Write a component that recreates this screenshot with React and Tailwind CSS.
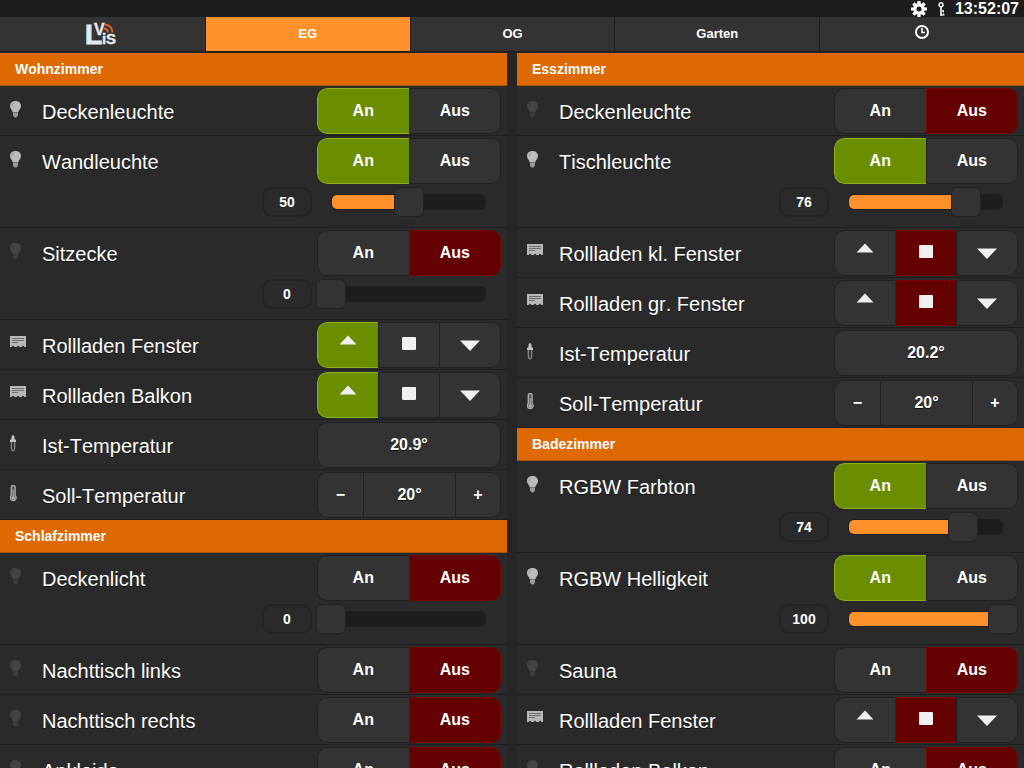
import { useState } from 'react'

const leftRooms = [
  {
    name: 'Wohnzimmer',
    items: [
      { type: 'switch', label: 'Deckenleuchte', on: true },
      { type: 'dimmer', label: 'Wandleuchte', on: true, value: 50 },
      { type: 'dimmer', label: 'Sitzecke', on: false, value: 0 },
      { type: 'shutter', label: 'Rollladen Fenster', state: 'up' },
      { type: 'shutter', label: 'Rollladen Balkon', state: 'up' },
      { type: 'sensor', label: 'Ist-Temperatur', value: '20.9°' },
      { type: 'setpoint', label: 'Soll-Temperatur', value: 20 },
    ],
  },
  {
    name: 'Schlafzimmer',
    items: [
      { type: 'dimmer', label: 'Deckenlicht', on: false, value: 0 },
      { type: 'switch', label: 'Nachttisch links', on: false },
      { type: 'switch', label: 'Nachttisch rechts', on: false },
      { type: 'switch', label: 'Ankleide', on: false },
    ],
  },
]

const rightRooms = [
  {
    name: 'Esszimmer',
    items: [
      { type: 'switch', label: 'Deckenleuchte', on: false },
      { type: 'dimmer', label: 'Tischleuchte', on: true, value: 76 },
      { type: 'shutter', label: 'Rollladen kl. Fenster', state: 'stop' },
      { type: 'shutter', label: 'Rollladen gr. Fenster', state: 'stop' },
      { type: 'sensor', label: 'Ist-Temperatur', value: '20.2°' },
      { type: 'setpoint', label: 'Soll-Temperatur', value: 20 },
    ],
  },
  {
    name: 'Badezimmer',
    items: [
      { type: 'dimmer', label: 'RGBW Farbton', on: true, value: 74 },
      { type: 'dimmer', label: 'RGBW Helligkeit', on: true, value: 100 },
      { type: 'switch', label: 'Sauna', on: false },
      { type: 'shutter', label: 'Rollladen Fenster', state: 'stop' },
      { type: 'switch', label: 'Rollladen Balkon', on: false },
    ],
  },
]

const groupClass = 'flex h-[46px] w-[184px] shrink-0 overflow-hidden rounded-[10px] text-base font-bold'
const idleClass = 'border-[#212121] bg-[#333333]'
const greenClass = 'border-[#8fb012] bg-[#6b8e00]'
const redClass = 'border-[#780505] bg-[#640000]'

function Logo() {
  return (
    <svg width="32" height="24" viewBox="0 0 32 24" className="overflow-visible" aria-label="LVis" role="img">
      <g fill="#e8e8e8" fontFamily="Liberation Sans, Arial, sans-serif" fontWeight="bold">
        <text x="-1" y="22" fontSize="28" stroke="#e8e8e8">L</text>
        <text x="8" y="13" fontSize="16" stroke="#e8e8e8" strokeWidth="0.4">V</text>
        <text x="16" y="22" fontSize="15" stroke="#e8e8e8" strokeWidth="0.4">i</text>
        <text x="20" y="22" fontSize="15" stroke="#e8e8e8" strokeWidth="0.4">S</text>
      </g>
      <g fill="none" stroke="#e0662a" strokeWidth="2">
        <path d="M18 6.500a4.500 4.500 0 0 1 4 4" />
        <path d="M18.500 2.500a8 8 0 0 1 8 8" />
      </g>
    </svg>
  )
}

function ClockIcon() {
  return (
    <svg width="14" height="14" viewBox="0 0 14 14" fill="none" stroke="#fff" aria-hidden="true">
      <circle cx="7" cy="7" r="6" strokeWidth="2" />
      <path d="M7 3V7.500H10" strokeWidth="1.600" />
    </svg>
  )
}

function GearIcon() {
  return (
    <svg width="16" height="16" viewBox="0 0 16 16" aria-hidden="true">
      <g stroke="#fff" strokeWidth="3.200">
        <path d="M8 0V4M8 12V16M0 8H4M12 8H16M2.400 2.400L5 5M11 11L13.600 13.600M13.600 2.400L11 5M5 11L2.400 13.600" />
      </g>
      <circle cx="8" cy="8" r="4.200" fill="none" stroke="#fff" strokeWidth="3.400" />
    </svg>
  )
}

function KeyIcon() {
  return (
    <svg width="8" height="14" viewBox="0 0 8 14" fill="none" stroke="#fff" aria-hidden="true">
      <circle cx="3" cy="2.800" r="2" strokeWidth="1.400" />
      <path d="M3 5V14" strokeWidth="1.600" />
      <path d="M3 9H6M5.300 8V10.500M3 12.800H6.500M5.500 11.500V13.500" strokeWidth="1.200" />
    </svg>
  )
}

function BulbIcon({ on }) {
  return (
    <svg width="17" height="17" viewBox="0 0 17 17" fill={on ? '#bcbcbc' : '#444444'} aria-hidden="true">
      <path d="M5.500 0C9 0 11 2.300 11 5C11 8 8.500 9 8.200 11.500H2.800C2.500 9 0 8 0 5C0 2.300 2 0 5.500 0Z" />
      <path d="M3 12H8V14.500L6.500 16.500H4.500L3 14.500Z" fill={on ? '#9a9a9a' : '#3c3c3c'} />
      <path d="M2 5.500C2 3.500 3 2.300 4.500 2" fill="none" stroke={on ? '#8f8f8f' : '#383838'} />
    </svg>
  )
}

function ShutterIcon() {
  return (
    <svg width="17" height="17" viewBox="0 0 17 17" aria-hidden="true">
      <path d="M0 1H16V12H14.500L13 10.500L11.500 12H9.500L8 10.500L6.500 12H4.500L3 10.500L1.500 12H0Z" fill="#b8b8b8" />
      <path d="M2 3.500H14M2 5.500H14M2 7.500H8" stroke="#6c6c6c" fill="none" />
    </svg>
  )
}

function ProbeIcon() {
  return (
    <svg width="17" height="17" viewBox="0 0 17 17" aria-hidden="true">
      <path d="M1.500 2.500Q1.500 0 3 0Q4.500 0 4.500 2.500V4L6 5V7H0V5L1.500 4Z" fill="#c4c4c4" />
      <path d="M1.300 7V12.500Q1.500 16 3 16Q4.500 16 4.700 12.500V7" fill="#333" stroke="#909090" strokeWidth="1.200" />
    </svg>
  )
}

function ThermometerIcon() {
  return (
    <svg width="17" height="17" viewBox="0 0 17 17" fill="none" aria-hidden="true">
      <path d="M1.300 2.400a1.900 1.900 0 0 1 3.800 0V10.500a2.900 2.900 0 1 1-3.800 0Z" fill="#555" stroke="#aaaaaa" strokeWidth="1.400" />
      <path d="M3.200 5V12" stroke="#a0a0a0" strokeWidth="1.200" />
      <circle cx="3.200" cy="13" r="1.700" fill="#b5b5b5" />
    </svg>
  )
}

function ItemIcon({ item, on }) {
  if (item.type === 'shutter') return <ShutterIcon />
  if (item.type === 'sensor') return <ProbeIcon />
  if (item.type === 'setpoint') return <ThermometerIcon />
  return <BulbIcon on={on} />
}

function OnOff({ label, on, setOn }) {
  return (
    <div className={groupClass} role="group" aria-label={label}>
      <button type="button" onClick={() => setOn(true)} className={`flex-1 rounded-l-[10px] border border-r-0 ${on ? greenClass : idleClass}`}>
        An
      </button>
      <button type="button" onClick={() => setOn(false)} className={`flex-1 rounded-r-[10px] border ${on ? idleClass : redClass}`}>
        Aus
      </button>
    </div>
  )
}

function Shutter({ label, initial }) {
  const [state, setState] = useState(initial)

  return (
    <div className={groupClass} role="group" aria-label={label}>
      <button
        type="button"
        aria-label="Auf"
        onClick={() => setState('up')}
        className={`flex flex-1 justify-center rounded-l-[10px] border border-r-0 pt-3 ${state === 'up' ? greenClass : idleClass}`}
      >
        <svg width="18" height="10" viewBox="0 0 18 10"><path d="M9 .5L17.500 9.500H.5Z" fill="#f0f0f0" /></svg>
      </button>
      <button
        type="button"
        aria-label="Stopp"
        onClick={() => setState('stop')}
        className={`flex flex-1 justify-center border border-r-0 pt-3 ${state === 'stop' ? redClass : idleClass}`}
      >
        <svg width="14" height="16" viewBox="0 0 14 16"><rect y="2" width="14" height="13" rx="1" fill="#f0f0f0" /></svg>
      </button>
      <button
        type="button"
        aria-label="Ab"
        onClick={() => setState('down')}
        className={`flex flex-1 justify-center rounded-r-[10px] border pt-4 ${state === 'down' ? greenClass : idleClass}`}
      >
        <svg width="20" height="12" viewBox="0 0 20 12"><path d="M0 1.500H20L10 12Z" fill="#f0f0f0" /></svg>
      </button>
    </div>
  )
}

function Setpoint({ label, initial }) {
  const [value, setValue] = useState(initial)

  return (
    <div className={groupClass} role="group" aria-label={label}>
      <button type="button" onClick={() => setValue(value - 1)} className={`w-[46px] rounded-l-[10px] border border-r-0 ${idleClass}`}>
        −
      </button>
      <output className={`flex flex-1 items-center justify-center border border-r-0 ${idleClass}`}>{value}°</output>
      <button type="button" onClick={() => setValue(value + 1)} className={`w-[46px] rounded-r-[10px] border ${idleClass}`}>
        +
      </button>
    </div>
  )
}

function Dimmer({ label, value, setValue }) {
  return (
    <div className="mt-[3px] flex items-center justify-end gap-1">
      <input
        type="text"
        aria-label={`${label} Wert`}
        value={value}
        onChange={(e) => setValue(Number(e.target.value) || 0)}
        className="h-[30px] w-[50px] rounded-[10px] border-2 border-[#242424] bg-[#2a2a2a] text-center text-sm font-bold text-white"
      />
      <div className="relative w-[185px] px-[15px]">
        <div className="h-4 overflow-hidden rounded-md border border-[#1f1f1f] bg-[#1d1d1d]">
          <div className="h-full bg-[#ff912d]" style={{ width: `${value}%` }} />
        </div>
        <input
          type="range"
          min="0"
          max="100"
          aria-label={label}
          value={value}
          onChange={(e) => setValue(Number(e.target.value))}
          className="absolute inset-0 h-4 w-full appearance-none bg-transparent [&::-webkit-slider-thumb]:h-[30px] [&::-webkit-slider-thumb]:w-[30px] [&::-webkit-slider-thumb]:appearance-none [&::-webkit-slider-thumb]:rounded-md [&::-webkit-slider-thumb]:border [&::-webkit-slider-thumb]:border-[#222222] [&::-webkit-slider-thumb]:bg-[#333333]"
        />
      </div>
    </div>
  )
}

function Item({ item }) {
  const [on, setOn] = useState(item.on)
  const [value, setValue] = useState(item.value)
  const dimmer = item.type === 'dimmer'

  return (
    <li className={`border-b border-[#1f1f1f] bg-[#2a2a2a] pt-0.5 pr-1.5 pl-2.5 ${dimmer ? 'h-[92px]' : 'h-[50px]'}`}>
      <div className="flex">
        <div className="w-8 shrink-0 pt-[13px]">
          <ItemIcon item={item} on={on} />
        </div>
        <div className="min-w-0 flex-1 truncate pt-2.5 text-xl leading-7 [font-kerning:none]">{item.label}</div>
        {(item.type === 'switch' || dimmer) && <OnOff label={item.label} on={on} setOn={setOn} />}
        {item.type === 'shutter' && <Shutter label={item.label} initial={item.state} />}
        {item.type === 'sensor' && (
          <output aria-label={item.label} className={`${groupClass} items-center justify-center border ${idleClass}`}>
            {item.value}
          </output>
        )}
        {item.type === 'setpoint' && <Setpoint label={item.label} initial={item.value} />}
      </div>
      {dimmer && <Dimmer label={item.label} value={value} setValue={setValue} />}
    </li>
  )
}

function Column({ rooms }) {
  return (
    <div className="min-w-0 flex-1">
      {rooms.map((room) => (
        <section key={room.name}>
          <h2 className="h-[33px] border-b border-[#a85308] bg-[#dd6900] px-[15px] text-sm leading-8 font-bold [font-kerning:none] [text-shadow:none]">
            {room.name}
          </h2>
          <ul>
            {room.items.map((item) => (
              <Item key={item.label} item={item} />
            ))}
          </ul>
        </section>
      ))}
    </div>
  )
}

export default function App() {
  const [tab, setTab] = useState('EG')

  const tabs = [
    { id: 'home', title: 'LVis', content: <Logo /> },
    { id: 'EG', title: 'EG', content: 'EG' },
    { id: 'OG', title: 'OG', content: 'OG' },
    { id: 'Garten', title: 'Garten', content: 'Garten' },
    { id: 'clock', title: 'Zeiten', content: <ClockIcon /> },
  ]

  return (
    <div className="flex h-screen flex-col overflow-hidden bg-[#252525] font-['Liberation_Sans',Arial,sans-serif] text-white [text-shadow:0_1px_0_#111]">
      <header className="flex h-[17px] shrink-0 items-center justify-end bg-[#1d1d1d] pr-[5px]">
        <button type="button" aria-label="Einstellungen" className="mr-[11px]">
          <GearIcon />
        </button>
        <button type="button" aria-label="Anmelden" className="mr-[9px]">
          <KeyIcon />
        </button>
        <time className="text-base leading-4 font-bold">13:52:07</time>
      </header>
      <nav className="grid h-9 shrink-0 grid-cols-5 border-b border-[#252525]">
        {tabs.map((t) => (
          <button
            key={t.id}
            type="button"
            aria-label={t.title}
            onClick={() => setTab(t.id)}
            className={`flex items-center justify-center border-b border-l border-[#1f1f1f] text-[13px] font-bold first:border-l-0 last:pb-1 ${
              tab === t.id ? 'bg-[#ff912d]' : 'bg-[#333333]'
            }`}
          >
            {t.content}
          </button>
        ))}
      </nav>
      <main className="flex flex-1 gap-2.5 overflow-y-auto [scrollbar-width:none]">
        <Column rooms={leftRooms} />
        <Column rooms={rightRooms} />
      </main>
    </div>
  )
}
